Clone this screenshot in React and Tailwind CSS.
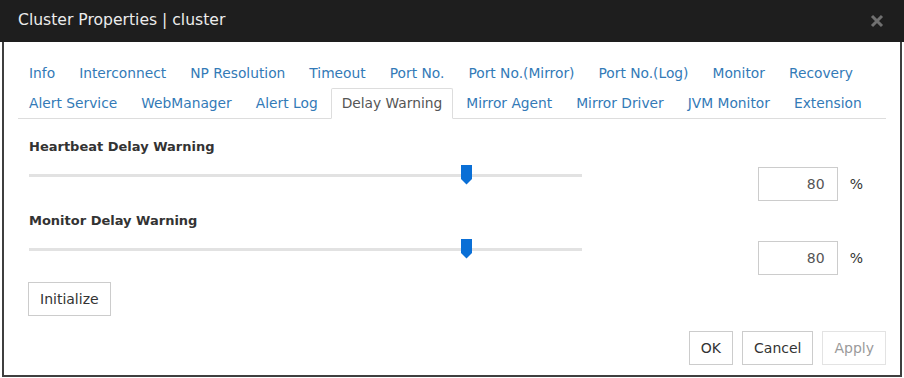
import clsx from 'clsx'

const row1 = ['Info', 'Interconnect', 'NP Resolution', 'Timeout', 'Port No.', 'Port No.(Mirror)', 'Port No.(Log)', 'Monitor', 'Recovery']
const row2 = ['Alert Service', 'WebManager', 'Alert Log', 'Delay Warning', 'Mirror Agent', 'Mirror Driver', 'JVM Monitor', 'Extension']

function Tab({ label, active }) {
  return (
    <li className="mr-[2px] -mb-px">
      <a className={clsx(
        'block border px-[10px] py-[5px] leading-[19px] text-[13.8px] rounded-t-[2px] cursor-pointer',
        active ? 'border-[#ddd] border-b-white bg-white text-[#555]' : 'border-transparent text-[#337ab7]'
      )}>{label}</a>
    </li>
  )
}

function Slider({ value }) {
  return (
    <div className="relative h-[20px] w-[553px] -mt-[2px]">
      <div className="absolute left-0 right-0 top-[9px] h-[3px] bg-[#e2e2e2]" />
      <svg className="absolute top-0" style={{ left: `calc(${value}% - ${value * 0.13}px)` }}
        width="11" height="20" viewBox="0 0 11 20">
        <path d="M0 0H11V14L5.5 19.5L0 14Z" fill="#0a6fd6" />
      </svg>
    </div>
  )
}

function DelayRow({ title, value, className }) {
  return (
    <div className={className}>
      <h3 className="text-[13px] font-bold leading-[20px] text-[#333] mb-[10px]">{title}</h3>
      <div className="flex items-start">
        <Slider value={value} />
        <div className="ml-auto flex items-center gap-3">
          <input readOnly value={value}
            className="w-[80px] h-[34px] border border-[#ccc] text-right pr-3 text-[14px] text-[#555] outline-none" />
          <span className="text-[14px] text-[#333]">%</span>
        </div>
      </div>
    </div>
  )
}

function Btn({ children, disabled }) {
  return (
    <button className={clsx(
      'h-[34px] px-[11px] border text-[14px] bg-white',
      disabled ? 'border-[#e3e3e3] text-[#9a9a9a]' : 'border-[#ccc] text-[#333]'
    )}>{children}</button>
  )
}

export default function App() {
  return (
    <div className="w-[904px] h-[378px] bg-white flex flex-col" style={{ fontFamily: '"DejaVu Sans", sans-serif' }}>
      {/* title bar */}
      <div className="h-[42px] bg-[#1e1e1e] flex items-center justify-between pl-[18px] pr-[20px] shrink-0">
        <span className="text-[15.6px] text-[#ececec]">Cluster Properties | cluster</span>
        <svg width="14" height="14" viewBox="0 0 14 14">
          <path d="M2 2L12 12M12 2L2 12" stroke="#707070" strokeWidth="3" />
        </svg>
      </div>

      <div className="flex-1 mx-[2px] mb-px border-x-2 border-b-2 border-[#3f3f3f] pt-4 px-[14px] pb-[10px] flex flex-col text-[14px]">
        <ul className="flex">
          {row1.map(t => <Tab key={t} label={t} />)}
        </ul>
        <ul className="flex border-b border-[#ddd]">
          {row2.map(t => <Tab key={t} label={t} active={t === 'Delay Warning'} />)}
        </ul>

        <div className="pl-[10px] pr-[23px] pt-[18px]">
          <DelayRow title="Heartbeat Delay Warning" value={80} className="pl-px" />
          <DelayRow title="Monitor Delay Warning" value={80} className="mt-[10px] pl-px" />
          <div className="mt-[7px]">
            <Btn>Initialize</Btn>
          </div>
        </div>

        <div className="mt-auto flex justify-end gap-[9px]">
          <Btn>OK</Btn>
          <Btn>Cancel</Btn>
          <Btn disabled>Apply</Btn>
        </div>
      </div>
    </div>
  )
}
